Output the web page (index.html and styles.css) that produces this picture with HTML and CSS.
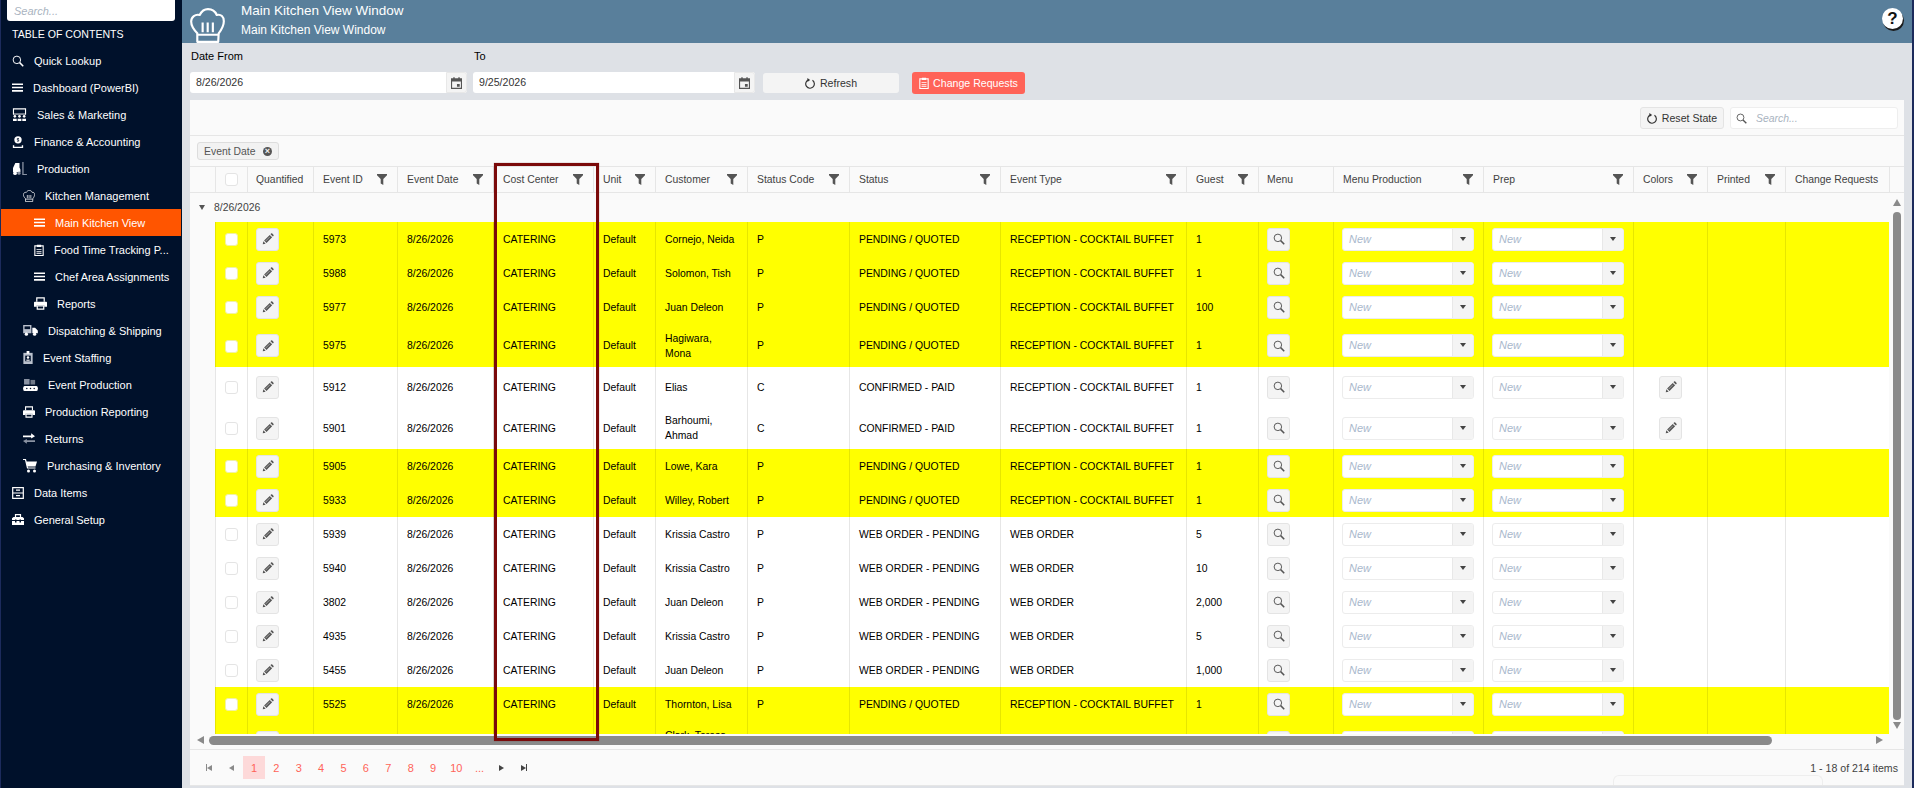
FILE: index.html
```html
<!DOCTYPE html>
<html>
<head>
  <title>Main Kitchen View Window</title>
  <link rel="stylesheet" href="styles.css">
</head>
<body>

  <svg class="icon-defs">
    <symbol id="i-search" viewBox="0 0 16 16"><circle cx="6.5" cy="6.5" r="5" fill="none" stroke="currentColor" stroke-width="1.300"/><path d="M10.200 10.200 15 15" stroke="currentColor" stroke-width="2"/></symbol>
    <symbol id="i-bars" viewBox="0 0 16 16"><path d="M0 2h16v2.400H0zM0 6.800h16v2.400H0zM0 11.600h16V14H0z" fill="currentColor"/></symbol>
    <symbol id="i-sales" viewBox="0 0 16 14"><path d="M1.500 7V1h13v6" fill="none" stroke="currentColor" stroke-width="1.200"/><path d="M1 6h14v1H1z" fill="currentColor"/><circle cx="3" cy="9" r="1.400" fill="currentColor"/><circle cx="8" cy="9" r="1.400" fill="currentColor"/><circle cx="13" cy="9" r="1.400" fill="currentColor"/><path d="M1 14v-2.400h4V14zM6 14v-2.400h4V14zM11 14v-2.400h4V14z" fill="currentColor"/></symbol>
    <symbol id="i-finance" viewBox="0 0 14 14"><circle cx="7" cy="4.500" r="4.300" fill="currentColor"/><path d="M1 14v-3.200h1.600v1.600h8.800v-1.600H13V14z" fill="currentColor"/><path d="M8.200 2.900H6.200v1.500h1.600v1.600H5.800" fill="none" stroke="#00112b" stroke-width=".9"/></symbol>
    <symbol id="i-forklift" viewBox="0 0 16 14"><path d="M1 6.500 3.500 1H8v5l1 2v3H1z" fill="currentColor"/><circle cx="3.200" cy="12" r="2" fill="currentColor"/><circle cx="7.500" cy="12" r="1.700" fill="#8a93a3"/><path d="M11 0h1.400v13H16v1h-5z" fill="#8a93a3"/></symbol>
    <symbol id="i-hat" viewBox="0 0 36 36"><path d="M7.500 26C3.500 22 1.200 18 1.200 14 1.200 9 5.500 6 10 7.200 12 3.200 15.500 1.200 18.500 1.200 23 1.200 26 3.500 27.500 7.200 32 6 34.800 9 34.800 13.500 34.800 18 32.500 22 29.500 26L29 34.800H7.500zM8 27.500H29M13 15v10M18.200 15v10M23.500 15v10" fill="none" stroke="currentColor" stroke-width="2.200" stroke-linejoin="round"/></symbol>
    <symbol id="i-clip" viewBox="0 0 12 14"><path d="M1 2h10v11.500H1z" fill="none" stroke="currentColor" stroke-width="1.300"/><path d="M3.500.6h5v2.800h-5zM3 6h6v1H3zM3 8.200h6v1H3zM3 10.400h6v1H3z" fill="currentColor"/></symbol>
    <symbol id="i-print" viewBox="0 0 14 14"><path d="M3 5V1h8v4" fill="none" stroke="currentColor" stroke-width="1.300"/><path d="M1 5h12a1 1 0 0 1 1 1v4.500h-3V9H3v1.500H0V6a1 1 0 0 1 1-1z" fill="currentColor"/><path d="M3.500 9.500h7V13h-7z" fill="none" stroke="currentColor" stroke-width="1.300"/></symbol>
    <symbol id="i-truck" viewBox="0 0 16 12"><path d="M0 0h9v9H0z" fill="#b9c0cc"/><path d="M1.500 1.500h6v3h-6z" fill="#00112b"/><path d="M10 3h3l3 3v3h-6z" fill="currentColor"/><circle cx="3.500" cy="10" r="1.800" fill="currentColor"/><circle cx="12.500" cy="10" r="1.800" fill="currentColor"/></symbol>
    <symbol id="i-badge" viewBox="0 0 10 14"><path d="M0 2h10v12H0z" fill="#b9c0cc"/><path d="M3.500 0h3v3h-3z" fill="currentColor"/><path d="M2 5h6v6H2z" fill="#00112b"/><circle cx="5" cy="7" r="1.300" fill="#fff"/><path d="M3.200 10.500h3.600V9.300H3.200z" fill="#fff"/></symbol>
    <symbol id="i-conveyor" viewBox="0 0 16 13"><path d="M1 0h6v6H1z" fill="#8a93a3"/><path d="M8 1h5v5H8z" fill="#6f7888"/><path d="M1.500 7.500h13a1.500 2.700 0 0 1 0 5.500h-13a1.500 2.700 0 0 1 0-5.500z" fill="currentColor"/><circle cx="4" cy="10.300" r=".8" fill="#00112b"/><circle cx="8" cy="10.300" r=".8" fill="#00112b"/><circle cx="12" cy="10.300" r=".8" fill="#00112b"/></symbol>
    <symbol id="i-swap" viewBox="0 0 14 12"><path d="M0 2.500h9.500V0L14 3.500 9.500 6V4.500H0z" fill="currentColor"/><path d="M14 8H4.500V6.500L0 9l4.500 3v-2H14z" fill="#8a93a3"/></symbol>
    <symbol id="i-cart" viewBox="0 0 14 14"><path d="M0 .5h2.500l2 8.500h8" fill="none" stroke="currentColor" stroke-width="1.200"/><path d="M3 2.500h11l-1.500 5H4.200z" fill="currentColor"/><circle cx="5.500" cy="12" r="1.500" fill="currentColor"/><circle cx="11.500" cy="12" r="1.500" fill="currentColor"/></symbol>
    <symbol id="i-drive" viewBox="0 0 12 12"><path d="M.7.700h10.600v10.600H.7zM.7 6h10.600" fill="none" stroke="currentColor" stroke-width="1.200"/><path d="M4 2.500h4v1.200H4zM4 8h4v1.200H4z" fill="currentColor"/></symbol>
    <symbol id="i-box" viewBox="0 0 12 11"><path d="M3.500 3V.7h5V3" fill="none" stroke="currentColor" stroke-width="1.200"/><path d="M0 6V4.300L1.500 3h9L12 4.300V6zM0 7h12v4H0z" fill="currentColor"/><path d="M3 5.500h1.500v3H3zM7.500 5.500H9v3H7.500z" fill="#00112b"/></symbol>
    <symbol id="i-pencil" viewBox="0 0 16 16"><path d="M1 15l.8-3.900 3.100 3.100zM2.800 10l7.500-7.500 3.200 3.200L6 13.200zM11.300 1.500l.7-.7a1.200 1.200 0 0 1 1.700 0l1.500 1.500a1.200 1.200 0 0 1 0 1.700l-.7.700z" fill="currentColor"/><path d="M4.800 10.800 10.600 5" stroke="#c8c8c8" stroke-width=".9"/></symbol>
    <symbol id="i-filter" viewBox="0 0 10 11"><path d="M0 0h10v1.200L6.300 5v6L3.700 9.500V5L0 1.200z" fill="currentColor"/></symbol>
    <symbol id="i-refresh" viewBox="0 0 14 14"><path d="M9.500 3A5.500 5.500 0 1 1 4 2.600" fill="none" stroke="currentColor" stroke-width="1.500"/><path d="M3 0l3.500 2.400L3 5z" fill="currentColor"/></symbol>
    <symbol id="i-calendar" viewBox="0 0 12 13"><path d="M.6 2h10.800v10.400H.6z" fill="none" stroke="currentColor" stroke-width="1.200"/><path d="M.6 2h10.800v2.800H.6zM2.500.3h1.500v2.500H2.500zM8 .3h1.500v2.500H8zM6.500 7.500h3v3h-3z" fill="currentColor"/></symbol>
  </svg>

  <div class="window">
    <aside class="sidebar">
      <input class="side-search" placeholder="Search...">
      <div class="toc-title">TABLE OF CONTENTS</div>
      <ul class="nav">
        <li class="lvl1"><svg width="12" height="12"><use href="#i-search"/></svg>Quick Lookup</li>
        <li class="lvl1"><svg width="11" height="11"><use href="#i-bars"/></svg>Dashboard (PowerBI)</li>
        <li class="lvl1"><svg width="15" height="13"><use href="#i-sales"/></svg>Sales &amp; Marketing</li>
        <li class="lvl1"><svg width="12" height="12"><use href="#i-finance"/></svg>Finance &amp; Accounting</li>
        <li class="lvl1"><svg width="15" height="13"><use href="#i-forklift"/></svg>Production</li>
        <li class="lvl2"><svg width="12" height="12"><use href="#i-hat"/></svg>Kitchen Management</li>
        <li class="lvl3 active"><svg width="11" height="11"><use href="#i-bars"/></svg>Main Kitchen View</li>
        <li class="lvl3"><svg width="10" height="12"><use href="#i-clip"/></svg>Food Time Tracking P...</li>
        <li class="lvl3"><svg width="11" height="11"><use href="#i-bars"/></svg>Chef Area Assignments</li>
        <li class="lvl3"><svg width="13" height="13"><use href="#i-print"/></svg>Reports</li>
        <li class="lvl2"><svg width="15" height="11"><use href="#i-truck"/></svg>Dispatching &amp; Shipping</li>
        <li class="lvl2"><svg width="10" height="13"><use href="#i-badge"/></svg>Event Staffing</li>
        <li class="lvl2"><svg width="15" height="12"><use href="#i-conveyor"/></svg>Event Production</li>
        <li class="lvl2"><svg width="12" height="12"><use href="#i-print"/></svg>Production Reporting</li>
        <li class="lvl2"><svg width="12" height="11"><use href="#i-swap"/></svg>Returns</li>
        <li class="lvl2"><svg width="14" height="14"><use href="#i-cart"/></svg>Purchasing &amp; Inventory</li>
        <li class="lvl1"><svg width="12" height="12"><use href="#i-drive"/></svg>Data Items</li>
        <li class="lvl1"><svg width="12" height="11"><use href="#i-box"/></svg>General Setup</li>
      </ul>
    </aside>

    <main class="main">
      <header class="topbar">
        <svg class="top-hat" width="35" height="35"><use href="#i-hat"/></svg>
        <div class="titles">
          <div class="title">Main Kitchen View Window</div>
          <div class="subtitle">Main Kitchen View Window</div>
        </div>
        <div class="help">?</div>
      </header>

      <div class="filters">
        <div class="field field-from">
          <label>Date From</label>
          <div class="date-input"><span>8/26/2026</span><span class="cal"><svg width="11" height="12"><use href="#i-calendar"/></svg></span></div>
        </div>
        <div class="field field-to">
          <label>To</label>
          <div class="date-input"><span>9/25/2026</span><span class="cal"><svg width="11" height="12"><use href="#i-calendar"/></svg></span></div>
        </div>
        <button class="btn-refresh"><svg width="11" height="11"><use href="#i-refresh"/></svg>Refresh</button>
        <button class="btn-requests"><svg width="10" height="12"><use href="#i-clip"/></svg>Change Requests</button>
      </div>

      <section class="grid">
        <div class="grid-toolbar">
          <button class="btn-reset"><svg width="11" height="11"><use href="#i-refresh"/></svg>Reset State</button>
          <div class="grid-search"><svg width="11" height="11"><use href="#i-search"/></svg><span>Search...</span></div>
        </div>
        <div class="group-bar">
          <span class="chip">Event Date<span class="chip-x">×</span></span>
        </div>

        <table class="head">
          <colgroup><col class="c-indent"><col class="c-check"><col class="c-quant"><col class="c-id"><col class="c-date"><col class="c-cost"><col class="c-unit"><col class="c-cust"><col class="c-code"><col class="c-status"><col class="c-type"><col class="c-guest"><col class="c-menu"><col class="c-prod"><col class="c-prep"><col class="c-colors"><col class="c-printed"><col class="c-req"><col class="c-gutter"></colgroup>
          <tr>
            <th class="no-line"></th>
            <th class="center"><span class="check"></span></th>
            <th class="tight">Quantified</th>
            <th><div class="th-in">Event ID<svg width="10" height="11"><use href="#i-filter"/></svg></div></th>
            <th><div class="th-in">Event Date<svg width="10" height="11"><use href="#i-filter"/></svg></div></th>
            <th><div class="th-in">Cost Center<svg width="10" height="11"><use href="#i-filter"/></svg></div></th>
            <th><div class="th-in">Unit<svg width="10" height="11"><use href="#i-filter"/></svg></div></th>
            <th><div class="th-in">Customer<svg width="10" height="11"><use href="#i-filter"/></svg></div></th>
            <th><div class="th-in">Status Code<svg width="10" height="11"><use href="#i-filter"/></svg></div></th>
            <th><div class="th-in">Status<svg width="10" height="11"><use href="#i-filter"/></svg></div></th>
            <th><div class="th-in">Event Type<svg width="10" height="11"><use href="#i-filter"/></svg></div></th>
            <th><div class="th-in">Guest<svg width="10" height="11"><use href="#i-filter"/></svg></div></th>
            <th class="tight">Menu</th>
            <th><div class="th-in">Menu Production<svg width="10" height="11"><use href="#i-filter"/></svg></div></th>
            <th><div class="th-in">Prep<svg width="10" height="11"><use href="#i-filter"/></svg></div></th>
            <th><div class="th-in">Colors<svg width="10" height="11"><use href="#i-filter"/></svg></div></th>
            <th><div class="th-in">Printed<svg width="10" height="11"><use href="#i-filter"/></svg></div></th>
            <th>Change Requests</th>
            <th></th>
          </tr>
        </table>

        <div class="grid-mid">
          <div class="body-clip">
            <table class="rows">
              <colgroup><col class="c-indent"><col class="c-check"><col class="c-quant"><col class="c-id"><col class="c-date"><col class="c-cost"><col class="c-unit"><col class="c-cust"><col class="c-code"><col class="c-status"><col class="c-type"><col class="c-guest"><col class="c-menu"><col class="c-prod"><col class="c-prep"><col class="c-colors"><col class="c-printed"><col class="c-req"></colgroup>
              <tr class="group-row"><td colspan="18"><span class="caret"></span>8/26/2026</td></tr>

              <tr class="hl">
                <td class="indent"></td><td class="center"><span class="check"></span></td><td class="tight"><span class="icon-btn"><svg width="12" height="12"><use href="#i-pencil"/></svg></span></td>
                <td>5973</td><td>8/26/2026</td><td>CATERING</td><td>Default</td><td>Cornejo, Neida</td><td>P</td><td>PENDING / QUOTED</td><td>RECEPTION - COCKTAIL BUFFET</td><td>1</td>
                <td class="tight"><span class="icon-btn"><svg width="12" height="12"><use href="#i-search"/></svg></span></td>
                <td><span class="dd"><i>New</i><b></b></span></td><td><span class="dd"><i>New</i><b></b></span></td><td></td><td></td><td></td>
              </tr>
              <tr class="hl">
                <td class="indent"></td><td class="center"><span class="check"></span></td><td class="tight"><span class="icon-btn"><svg width="12" height="12"><use href="#i-pencil"/></svg></span></td>
                <td>5988</td><td>8/26/2026</td><td>CATERING</td><td>Default</td><td>Solomon, Tish</td><td>P</td><td>PENDING / QUOTED</td><td>RECEPTION - COCKTAIL BUFFET</td><td>1</td>
                <td class="tight"><span class="icon-btn"><svg width="12" height="12"><use href="#i-search"/></svg></span></td>
                <td><span class="dd"><i>New</i><b></b></span></td><td><span class="dd"><i>New</i><b></b></span></td><td></td><td></td><td></td>
              </tr>
              <tr class="hl">
                <td class="indent"></td><td class="center"><span class="check"></span></td><td class="tight"><span class="icon-btn"><svg width="12" height="12"><use href="#i-pencil"/></svg></span></td>
                <td>5977</td><td>8/26/2026</td><td>CATERING</td><td>Default</td><td>Juan Deleon</td><td>P</td><td>PENDING / QUOTED</td><td>RECEPTION - COCKTAIL BUFFET</td><td>100</td>
                <td class="tight"><span class="icon-btn"><svg width="12" height="12"><use href="#i-search"/></svg></span></td>
                <td><span class="dd"><i>New</i><b></b></span></td><td><span class="dd"><i>New</i><b></b></span></td><td></td><td></td><td></td>
              </tr>
              <tr class="hl tall">
                <td class="indent"></td><td class="center"><span class="check"></span></td><td class="tight"><span class="icon-btn"><svg width="12" height="12"><use href="#i-pencil"/></svg></span></td>
                <td>5975</td><td>8/26/2026</td><td>CATERING</td><td>Default</td><td>Hagiwara,<br>Mona</td><td>P</td><td>PENDING / QUOTED</td><td>RECEPTION - COCKTAIL BUFFET</td><td>1</td>
                <td class="tight"><span class="icon-btn"><svg width="12" height="12"><use href="#i-search"/></svg></span></td>
                <td><span class="dd"><i>New</i><b></b></span></td><td><span class="dd"><i>New</i><b></b></span></td><td></td><td></td><td></td>
              </tr>
              <tr class="plain colored">
                <td class="indent"></td><td class="center"><span class="check"></span></td><td class="tight"><span class="icon-btn"><svg width="12" height="12"><use href="#i-pencil"/></svg></span></td>
                <td>5912</td><td>8/26/2026</td><td>CATERING</td><td>Default</td><td>Elias</td><td>C</td><td>CONFIRMED - PAID</td><td>RECEPTION - COCKTAIL BUFFET</td><td>1</td>
                <td class="tight"><span class="icon-btn"><svg width="12" height="12"><use href="#i-search"/></svg></span></td>
                <td><span class="dd"><i>New</i><b></b></span></td><td><span class="dd"><i>New</i><b></b></span></td><td class="center"><span class="icon-btn"><svg width="12" height="12"><use href="#i-pencil"/></svg></span></td><td></td><td></td>
              </tr>
              <tr class="plain colored-tall">
                <td class="indent"></td><td class="center"><span class="check"></span></td><td class="tight"><span class="icon-btn"><svg width="12" height="12"><use href="#i-pencil"/></svg></span></td>
                <td>5901</td><td>8/26/2026</td><td>CATERING</td><td>Default</td><td>Barhoumi,<br>Ahmad</td><td>C</td><td>CONFIRMED - PAID</td><td>RECEPTION - COCKTAIL BUFFET</td><td>1</td>
                <td class="tight"><span class="icon-btn"><svg width="12" height="12"><use href="#i-search"/></svg></span></td>
                <td><span class="dd"><i>New</i><b></b></span></td><td><span class="dd"><i>New</i><b></b></span></td><td class="center"><span class="icon-btn"><svg width="12" height="12"><use href="#i-pencil"/></svg></span></td><td></td><td></td>
              </tr>
              <tr class="hl">
                <td class="indent"></td><td class="center"><span class="check"></span></td><td class="tight"><span class="icon-btn"><svg width="12" height="12"><use href="#i-pencil"/></svg></span></td>
                <td>5905</td><td>8/26/2026</td><td>CATERING</td><td>Default</td><td>Lowe, Kara</td><td>P</td><td>PENDING / QUOTED</td><td>RECEPTION - COCKTAIL BUFFET</td><td>1</td>
                <td class="tight"><span class="icon-btn"><svg width="12" height="12"><use href="#i-search"/></svg></span></td>
                <td><span class="dd"><i>New</i><b></b></span></td><td><span class="dd"><i>New</i><b></b></span></td><td></td><td></td><td></td>
              </tr>
              <tr class="hl">
                <td class="indent"></td><td class="center"><span class="check"></span></td><td class="tight"><span class="icon-btn"><svg width="12" height="12"><use href="#i-pencil"/></svg></span></td>
                <td>5933</td><td>8/26/2026</td><td>CATERING</td><td>Default</td><td>Willey, Robert</td><td>P</td><td>PENDING / QUOTED</td><td>RECEPTION - COCKTAIL BUFFET</td><td>1</td>
                <td class="tight"><span class="icon-btn"><svg width="12" height="12"><use href="#i-search"/></svg></span></td>
                <td><span class="dd"><i>New</i><b></b></span></td><td><span class="dd"><i>New</i><b></b></span></td><td></td><td></td><td></td>
              </tr>
              <tr class="plain">
                <td class="indent"></td><td class="center"><span class="check"></span></td><td class="tight"><span class="icon-btn"><svg width="12" height="12"><use href="#i-pencil"/></svg></span></td>
                <td>5939</td><td>8/26/2026</td><td>CATERING</td><td>Default</td><td>Krissia Castro</td><td>P</td><td>WEB ORDER - PENDING</td><td>WEB ORDER</td><td>5</td>
                <td class="tight"><span class="icon-btn"><svg width="12" height="12"><use href="#i-search"/></svg></span></td>
                <td><span class="dd"><i>New</i><b></b></span></td><td><span class="dd"><i>New</i><b></b></span></td><td></td><td></td><td></td>
              </tr>
              <tr class="plain">
                <td class="indent"></td><td class="center"><span class="check"></span></td><td class="tight"><span class="icon-btn"><svg width="12" height="12"><use href="#i-pencil"/></svg></span></td>
                <td>5940</td><td>8/26/2026</td><td>CATERING</td><td>Default</td><td>Krissia Castro</td><td>P</td><td>WEB ORDER - PENDING</td><td>WEB ORDER</td><td>10</td>
                <td class="tight"><span class="icon-btn"><svg width="12" height="12"><use href="#i-search"/></svg></span></td>
                <td><span class="dd"><i>New</i><b></b></span></td><td><span class="dd"><i>New</i><b></b></span></td><td></td><td></td><td></td>
              </tr>
              <tr class="plain">
                <td class="indent"></td><td class="center"><span class="check"></span></td><td class="tight"><span class="icon-btn"><svg width="12" height="12"><use href="#i-pencil"/></svg></span></td>
                <td>3802</td><td>8/26/2026</td><td>CATERING</td><td>Default</td><td>Juan Deleon</td><td>P</td><td>WEB ORDER - PENDING</td><td>WEB ORDER</td><td>2,000</td>
                <td class="tight"><span class="icon-btn"><svg width="12" height="12"><use href="#i-search"/></svg></span></td>
                <td><span class="dd"><i>New</i><b></b></span></td><td><span class="dd"><i>New</i><b></b></span></td><td></td><td></td><td></td>
              </tr>
              <tr class="plain">
                <td class="indent"></td><td class="center"><span class="check"></span></td><td class="tight"><span class="icon-btn"><svg width="12" height="12"><use href="#i-pencil"/></svg></span></td>
                <td>4935</td><td>8/26/2026</td><td>CATERING</td><td>Default</td><td>Krissia Castro</td><td>P</td><td>WEB ORDER - PENDING</td><td>WEB ORDER</td><td>5</td>
                <td class="tight"><span class="icon-btn"><svg width="12" height="12"><use href="#i-search"/></svg></span></td>
                <td><span class="dd"><i>New</i><b></b></span></td><td><span class="dd"><i>New</i><b></b></span></td><td></td><td></td><td></td>
              </tr>
              <tr class="plain">
                <td class="indent"></td><td class="center"><span class="check"></span></td><td class="tight"><span class="icon-btn"><svg width="12" height="12"><use href="#i-pencil"/></svg></span></td>
                <td>5455</td><td>8/26/2026</td><td>CATERING</td><td>Default</td><td>Juan Deleon</td><td>P</td><td>WEB ORDER - PENDING</td><td>WEB ORDER</td><td>1,000</td>
                <td class="tight"><span class="icon-btn"><svg width="12" height="12"><use href="#i-search"/></svg></span></td>
                <td><span class="dd"><i>New</i><b></b></span></td><td><span class="dd"><i>New</i><b></b></span></td><td></td><td></td><td></td>
              </tr>
              <tr class="hl">
                <td class="indent"></td><td class="center"><span class="check"></span></td><td class="tight"><span class="icon-btn"><svg width="12" height="12"><use href="#i-pencil"/></svg></span></td>
                <td>5525</td><td>8/26/2026</td><td>CATERING</td><td>Default</td><td>Thornton, Lisa</td><td>P</td><td>PENDING / QUOTED</td><td>RECEPTION - COCKTAIL BUFFET</td><td>1</td>
                <td class="tight"><span class="icon-btn"><svg width="12" height="12"><use href="#i-search"/></svg></span></td>
                <td><span class="dd"><i>New</i><b></b></span></td><td><span class="dd"><i>New</i><b></b></span></td><td></td><td></td><td></td>
              </tr>
              <tr class="hl tall">
                <td class="indent"></td><td class="center"><span class="check"></span></td><td class="tight"><span class="icon-btn"><svg width="12" height="12"><use href="#i-pencil"/></svg></span></td>
                <td></td><td></td><td></td><td></td><td>Clark, Teresa<br>&nbsp;</td><td></td><td></td><td></td><td></td>
                <td class="tight"><span class="icon-btn"><svg width="12" height="12"><use href="#i-search"/></svg></span></td>
                <td><span class="dd"><i>New</i><b></b></span></td><td><span class="dd"><i>New</i><b></b></span></td><td></td><td></td><td></td>
              </tr>
            </table>
          </div>
          <div class="vscroll">
            <span class="arrow-up"></span>
            <span class="vthumb"></span>
            <span class="arrow-down"></span>
          </div>
        </div>

        <div class="hscroll">
          <span class="arrow-left"></span>
          <span class="hthumb"></span>
          <span class="arrow-right"></span>
        </div>

        <div class="pager">
          <div class="pages">
            <span class="pg"><span class="pg-bar"></span><span class="arrow-left small"></span></span>
            <span class="pg"><span class="arrow-left small"></span></span>
            <span class="pg current">1</span>
            <span class="pg">2</span>
            <span class="pg">3</span>
            <span class="pg">4</span>
            <span class="pg">5</span>
            <span class="pg">6</span>
            <span class="pg">7</span>
            <span class="pg">8</span>
            <span class="pg">9</span>
            <span class="pg pg-wide">10</span>
            <span class="pg">...</span>
            <span class="pg"><span class="arrow-right small dark"></span></span>
            <span class="pg"><span class="arrow-right small dark"></span><span class="pg-bar dark"></span></span>
          </div>
          <div class="pager-info">1 - 18 of 214 items</div>
        </div>

        <div class="corner-tab"></div>
        <div class="cost-mark"></div>
      </section>
    </main>
  </div>

</body>
</html>
```

FILE: styles.css
```css
body {
  margin: 0;
  padding: 0;
  overflow: hidden;
  font-family: "Liberation Sans", Arial, sans-serif;
  font-size: 10.4px;
  color: #000;
}
.icon-defs {
  display: none;
}
.window {
  display: flex;
  height: 788px;
  background: #dee1e6;
  border-left: 1px solid #1c2b5c;
  border-right: 2px solid #1c2b5c;
  box-sizing: border-box;
}

/* sidebar */
.sidebar {
  width: 181px;
  flex-shrink: 0;
  background: #00112b;
  color: #fff;
}
.side-search {
  display: block;
  box-sizing: border-box;
  width: 168px;
  height: 21px;
  margin: 0 0 0 6px;
  padding: 0 7px;
  border: 0;
  border-radius: 0 0 3px 3px;
  background: #fff;
  font-family: inherit;
  font-size: 11px;
  font-style: italic;
}
.side-search::placeholder {
  color: #a9b3c0;
}
.toc-title {
  height: 26px;
  line-height: 26px;
  padding-left: 11px;
  font-size: 10.6px;
}
.nav {
  list-style: none;
  margin: 0;
  padding: 0;
  font-size: 11px;
}
.nav li {
  display: flex;
  align-items: center;
  gap: 10px;
  height: 27px;
  white-space: nowrap;
}
.nav .lvl1 {
  padding-left: 11px;
}
.nav .lvl2 {
  padding-left: 22px;
}
.nav .lvl3 {
  padding-left: 33px;
}
.nav .active {
  background: #ff5500;
  margin-right: 1px;
}

/* top bar */
.main {
  flex: 1;
  min-width: 0;
  display: flex;
  flex-direction: column;
}
.topbar {
  display: flex;
  align-items: flex-start;
  height: 43px;
  flex-shrink: 0;
  background: #597f9b;
  color: #fff;
  position: relative;
}
.top-hat {
  margin: 8px 16px 0 8px;
}
.title {
  font-size: 13.5px;
  line-height: 16px;
  margin-top: 3px;
}
.subtitle {
  font-size: 12px;
  line-height: 16px;
  margin-top: 3px;
}
.help {
  position: absolute;
  top: 8px;
  right: 9px;
  width: 21px;
  height: 21px;
  border-radius: 50%;
  background: #fff;
  color: #111;
  font-size: 17px;
  font-weight: bold;
  line-height: 22px;
  text-align: center;
  box-shadow: 1px 2px 0 #1a1a1a;
}

/* date filters */
.filters {
  display: flex;
  align-items: flex-end;
  height: 57px;
  padding: 0 0 6px 8px;
  flex-shrink: 0;
  box-sizing: border-box;
}
.field {
  padding-bottom: 1px;
}
.field label {
  display: block;
  font-size: 11px;
  line-height: 14px;
  margin-bottom: 9px;
  padding-left: 1px;
}
.field-from {
  width: 277px;
  margin-right: 6px;
}
.field-to {
  width: 282px;
  margin-right: 8px;
}
.date-input {
  display: flex;
  justify-content: space-between;
  height: 21px;
  line-height: 21px;
  background: #fff;
  border-radius: 3px;
  padding-left: 6px;
  color: #333;
  font-size: 10.6px;
}
.cal {
  display: flex;
  align-items: center;
  justify-content: center;
  width: 21px;
  background: #f4f4f4;
  border: 1px solid #e8e8e8;
  border-radius: 0 3px 3px 0;
  box-sizing: border-box;
  color: #555;
}
.btn-refresh, .btn-requests, .btn-reset {
  display: flex;
  align-items: center;
  justify-content: center;
  gap: 4px;
  font-family: inherit;
  font-size: 10.6px;
  border-radius: 3px;
  padding: 0;
}
.btn-refresh {
  width: 136px;
  height: 20px;
  margin: 0 13px 1px 0;
  background: #f4f4f4;
  border: 0;
  color: #333;
}
.btn-requests {
  width: 113px;
  height: 22px;
  background: #ff6358;
  border: 0;
  color: #fff;
}

/* grid */
.grid {
  position: relative;
  display: flex;
  flex-direction: column;
  width: 1714px;
  height: 685px;
  margin-left: 8px;
  background: #fafafa;
  border-bottom: 1px solid #e6e6e6;
  box-sizing: content-box;
}
.grid-toolbar {
  display: flex;
  justify-content: flex-end;
  gap: 6px;
  height: 36px;
  padding: 7px 6px 0 0;
  box-sizing: border-box;
  border-bottom: 1px solid #e6e6e6;
  flex-shrink: 0;
}
.btn-reset {
  width: 84px;
  height: 22px;
  background: #f4f4f4;
  border: 1px solid #e4e4e4;
  color: #333;
}
.grid-search {
  display: flex;
  align-items: center;
  width: 168px;
  height: 22px;
  box-sizing: border-box;
  padding-left: 5px;
  gap: 9px;
  background: #fff;
  border: 1px solid #eee;
  border-radius: 3px;
  color: #555;
}
.grid-search span {
  color: #a9b3c0;
  font-style: italic;
}
.group-bar {
  height: 31px;
  padding: 6px 0 0 7px;
  box-sizing: border-box;
  border-bottom: 1px solid #e6e6e6;
  flex-shrink: 0;
}
.chip {
  display: inline-flex;
  align-items: center;
  justify-content: space-between;
  box-sizing: border-box;
  width: 82px;
  height: 18px;
  padding: 0 6px;
  background: #f2f2f2;
  border: 1px solid #ddd;
  border-radius: 3px;
  color: #555;
}
.chip-x {
  width: 9px;
  height: 9px;
  border-radius: 50%;
  background: #555;
  color: #f2f2f2;
  font-size: 9px;
  line-height: 9px;
  text-align: center;
  font-weight: bold;
}

table {
  table-layout: fixed;
  border-collapse: separate;
  border-spacing: 0;
  font-size: 10.4px;
}
.c-indent { width: 25px; }
.c-check { width: 32px; }
.c-quant { width: 66px; }
.c-id { width: 84px; }
.c-date { width: 96px; }
.c-cost { width: 100px; }
.c-unit { width: 62px; }
.c-cust { width: 92px; }
.c-code { width: 102px; }
.c-status { width: 151px; }
.c-type { width: 186px; }
.c-guest { width: 72px; }
.c-menu { width: 75px; }
.c-prod { width: 150px; }
.c-prep { width: 150px; }
.c-colors { width: 74px; }
.c-printed { width: 78px; }
.c-req { width: 104px; }
.c-gutter { width: 15px; }

.head {
  width: 1714px;
  flex-shrink: 0;
}
.head th {
  height: 26px;
  padding: 0 9px;
  border-left: 1px solid #e6e6e6;
  border-bottom: 1px solid #e6e6e6;
  box-sizing: border-box;
  font-weight: normal;
  text-align: left;
  color: #424242;
  white-space: nowrap;
}
.head .no-line {
  border-left: 0;
}
.th-in {
  display: flex;
  align-items: center;
  justify-content: space-between;
  padding-right: 1px;
}
.th-in svg {
  color: #555;
}
.grid-mid {
  display: flex;
  height: 541px;
  flex-shrink: 0;
}
.body-clip {
  width: 1699px;
  height: 541px;
  overflow: hidden;
  flex-shrink: 0;
}
.rows {
  width: 1699px;
}
.rows td {
  height: 34px;
  padding: 0 9px;
  box-sizing: border-box;
  border-left: 1px solid #e6e6e6;
  line-height: 15px;
  vertical-align: middle;
}
.rows .tall td {
  height: 43px;
}
.rows .colored td {
  height: 40px;
}
.rows .colored-tall td {
  height: 42px;
}
.rows .group-row td {
  height: 29px;
  padding-left: 9px;
  border: 0;
  color: #424242;
}
.rows .indent {
  background: #fafafa;
  border-left: 0;
}
.hl td {
  background: #ff0;
  border-left-color: #e6e600;
}
.plain td {
  background: #fff;
}
.rows td.center, .head th.center {
  padding: 0;
  text-align: center;
}
.rows td.tight, .head th.tight {
  padding-left: 8px;
}
.caret {
  display: inline-block;
  border-style: solid;
  border-width: 5px 3.5px 0;
  border-color: #555 transparent transparent;
  margin-right: 9px;
  vertical-align: 1px;
}
.check {
  display: inline-block;
  width: 13px;
  height: 13px;
  background: #fff;
  border: 1px solid #e4e4e4;
  border-radius: 3px;
  box-sizing: border-box;
  vertical-align: middle;
}
.hl .check {
  border-color: #f2f2a0;
}
.icon-btn {
  display: inline-flex;
  align-items: center;
  justify-content: center;
  width: 23px;
  height: 23px;
  background: #f4f4f4;
  border: 1px solid #e4e4e4;
  border-radius: 3px;
  box-sizing: border-box;
  color: #555;
  vertical-align: middle;
}
.dd {
  display: flex;
  justify-content: space-between;
  box-sizing: border-box;
  height: 23px;
  margin-left: -1px;
  background: #fff;
  border: 1px solid #ececec;
  border-radius: 3px;
  overflow: hidden;
}
.dd i {
  padding-left: 6px;
  line-height: 21px;
  font-size: 11px;
  color: #a9b8cc;
}
.dd b {
  position: relative;
  width: 20px;
  background: #f4f4f4;
  border-left: 1px solid #e8e8e8;
}
.dd b::after {
  content: "";
  position: absolute;
  left: 7px;
  top: 8px;
  border-style: solid;
  border-width: 4px 3px 0;
  border-color: #444 transparent transparent;
}

/* scrollbars */
.vscroll {
  flex: 1;
  display: flex;
  flex-direction: column;
  align-items: center;
  padding-top: 6px;
}
.vthumb {
  width: 8px;
  height: 508px;
  margin: 6px 0 2px;
  background: #8a8a8a;
  border-radius: 4px;
}
.arrow-up, .arrow-down, .arrow-left, .arrow-right {
  display: inline-block;
  border-style: solid;
  border-color: transparent;
}
.arrow-up {
  border-width: 0 4.5px 7px;
  border-bottom-color: #8a8a8a;
}
.arrow-down {
  border-width: 7px 4.5px 0;
  border-top-color: #8a8a8a;
}
.arrow-left {
  border-width: 4.5px 7px 4.5px 0;
  border-right-color: #8a8a8a;
}
.arrow-right {
  border-width: 4.5px 0 4.5px 7px;
  border-left-color: #8a8a8a;
}
.arrow-left.small {
  border-width: 3.5px 5px 3.5px 0;
}
.arrow-right.small {
  border-width: 3.5px 0 3.5px 5px;
}
.arrow-right.small.dark {
  border-left-color: #444;
}
.hscroll {
  display: flex;
  align-items: center;
  height: 15px;
  padding: 0 0 3px 7px;
  box-sizing: border-box;
  flex-shrink: 0;
}
.hthumb {
  width: 1563px;
  height: 9px;
  margin: 0 104px 0 5px;
  background: #8a8a8a;
  border-radius: 5px;
}

/* pager */
.pager {
  display: flex;
  align-items: center;
  justify-content: space-between;
  flex: 1;
  padding: 0 6px 0 8px;
  border-top: 1px solid #e6e6e6;
  color: #424242;
  font-size: 11px;
}
.pages {
  display: flex;
  align-items: center;
  color: #ff6358;
}
.pg {
  display: flex;
  align-items: center;
  justify-content: center;
  width: 22.4px;
  height: 23px;
}
.pg-wide {
  width: 24px;
}
.pg.current {
  background: #fdd9d9;
}
.pg-bar {
  width: 1px;
  height: 7px;
  background: #8a8a8a;
}
.pg-bar.dark {
  background: #444;
}
.pager-info {
  font-size: 10.6px;
}
.corner-tab {
  position: absolute;
  left: 1423px;
  bottom: 0;
  width: 208px;
  height: 9px;
  border: 1px solid #eee;
  border-bottom: 0;
  border-radius: 6px 6px 0 0;
  background: #fafafa;
}
.cost-mark {
  position: absolute;
  left: 304px;
  top: 63px;
  width: 105px;
  height: 578px;
  box-sizing: border-box;
  border: 3px solid #7b0a0a;
  box-shadow: 0 0 1px rgba(80, 0, 0, .5);
}
```
